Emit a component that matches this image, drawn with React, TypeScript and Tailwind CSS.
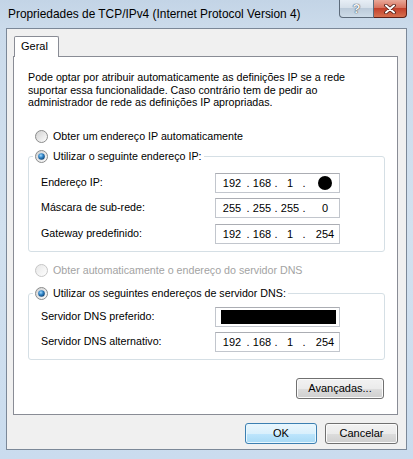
import { useId } from "react";

const font = "font-['Liberation_Sans',Arial,sans-serif]";

function Radio({ checked = false, disabled = false }: { checked?: boolean; disabled?: boolean }) {
  const id = useId().replace(/:/g, "");
  return (
    <svg width="13" height="13" viewBox="0 0 13 13" className="shrink-0">
      <defs>
        <linearGradient id={`f${id}`} x1="0" y1="0" x2="1" y2="1">
          <stop offset="0" stopColor={disabled ? "#e6e6e6" : "#cfcfcf"} />
          <stop offset="1" stopColor="#ffffff" />
        </linearGradient>
        <radialGradient id={`d${id}`} cx="0.4" cy="0.35" r="0.75">
          <stop offset="0" stopColor="#a8ddff" />
          <stop offset="0.45" stopColor="#2f83c6" />
          <stop offset="1" stopColor="#0b3560" />
        </radialGradient>
      </defs>
      <circle cx="6.5" cy="6.5" r="6" fill={`url(#f${id})`} stroke={disabled ? "#c6c6c6" : "#8b8c8c"} />
      {checked && <circle cx="6.5" cy="6.5" r="3.3" fill={`url(#d${id})`} />}
    </svg>
  );
}

function IpBox({ parts, blob = false }: { parts: string[]; blob?: boolean }) {
  return (
    <div className="flex h-[20px] w-[125px] items-center border border-[#c2c6cd] border-t-[#abadb3] bg-white pl-[2px] text-[11px] leading-[18px]">
      <span className="w-[28px] text-center">{parts[0]}</span>
      <span className="w-[4px] text-center">.</span>
      <span className="w-[24px] text-center">{parts[1]}</span>
      <span className="w-[4px] text-center">.</span>
      <span className="w-[24px] text-center">{parts[2]}</span>
      <span className="w-[4px] text-center">.</span>
      <span className="ml-[6px] flex w-[26px] justify-center">
        {blob ? <span className="block h-[14px] w-[14px] rounded-full bg-black" /> : parts[3]}
      </span>
    </div>
  );
}

function Row({ label, children, className = "" }: { label: string; children: React.ReactNode; className?: string }) {
  return (
    <div className={`flex h-[20px] items-center pl-[12px] ${className}`}>
      <span className="w-[174px]">{label}</span>
      {children}
    </div>
  );
}

function Button({ children, primary = false, className = "" }: { children: React.ReactNode; primary?: boolean; className?: string }) {
  return (
    <div
      className={`flex h-[21px] items-center justify-center rounded-[3px] border text-[11px] ${
        primary
          ? "border-[#3c7fb1] bg-[linear-gradient(180deg,#eaf6fd_0%,#d9f0fc_50%,#bee6fd_50%,#a7d9f5_100%)] shadow-[inset_0_0_0_1px_#e6f7ff]"
          : "border-[#707070] bg-[linear-gradient(180deg,#f2f2f2_0%,#ebebeb_50%,#dddddd_50%,#cfcfcf_100%)] shadow-[inset_0_0_0_1px_#fbfbfb]"
      } ${className}`}
    >
      {children}
    </div>
  );
}

export default function App() {
  return (
    <div
      className={`flex h-[459px] w-[413px] flex-col overflow-hidden bg-[linear-gradient(180deg,#c3d4e6_0%,#cbdbeb_6%,#d2e1ef_50%,#cadcee_100%)] px-[6px] pb-[9px] text-black ${font}`}
    >
      {/* Title bar */}
      <div className="flex h-[28px] items-start">
        <span className="ml-[2px] mt-[7px] text-[11.9px] leading-[15px]">
          Propriedades de TCP/IPv4 (Internet Protocol Version 4)
        </span>
        <div className="ml-auto flex">
          <div className="flex h-[18px] w-[35px] items-center justify-center rounded-bl-[4px] border border-t-0 border-[#5d6b7b] bg-[linear-gradient(180deg,#e7eef5_0%,#d6e0ea_45%,#bccbda_50%,#cddbe8_100%)] text-[13px] font-bold leading-none text-[#f3f5f7] [text-shadow:0_0_1px_#34404c,0_0_1px_#34404c]">
            ?
          </div>
          <div className="flex h-[18px] w-[33px] items-center justify-center rounded-br-[4px] border border-l-0 border-t-0 border-[#5e1f16] bg-[linear-gradient(180deg,#e9a898_0%,#d8735f_45%,#c3402b_50%,#d6704f_100%)]">
            <svg width="12" height="10" viewBox="0 0 12 10">
              <path d="M2 1.5 L10 8.5 M10 1.5 L2 8.5" stroke="#4a1a12" strokeWidth="3.6" strokeLinecap="round" />
              <path d="M2 1.5 L10 8.5 M10 1.5 L2 8.5" stroke="#ffffff" strokeWidth="2" strokeLinecap="round" />
            </svg>
          </div>
        </div>
      </div>

      {/* Client area */}
      <div className="flex flex-1 flex-col border border-[#7b8898] bg-[#f0f0f0] pb-[5px] pl-[6px] pr-[8px] pt-[7px]">
        <div className="relative z-10 -mb-px ml-[1px] h-[21px] w-[45px] rounded-t-[2px] border border-b-0 border-[#898c95] bg-white pl-[6px] text-[11px] leading-[18px]">
          Geral
        </div>

        <div className="flex h-[359px] flex-col border border-[#898c95] bg-white pl-[14px] pr-[12px] pt-[14px] text-[10.7px]">
          <p className="leading-[12.5px]">
            Pode optar por atribuir automaticamente as definições IP se a rede
            <br />
            suportar essa funcionalidade. Caso contrário tem de pedir ao
            <br />
            administrador de rede as definições IP apropriadas.
          </p>

          <div className="ml-[7px] mt-[21px] flex h-[14px] items-center gap-[5px]">
            <Radio />
            <span>Obter um endereço IP automaticamente</span>
          </div>

          <fieldset className="mt-[6px] flex flex-col rounded-[3px] border border-[#d5dfe5] pb-[7px] pt-[9px]">
            <legend className="ml-[4px] flex h-[14px] items-center gap-[5px] px-[2px]">
              <Radio checked />
              <span>Utilizar o seguinte endereço IP:</span>
            </legend>
            <Row label="Endereço IP:">
              <IpBox parts={["192", "168", "1", ""]} blob />
            </Row>
            <Row label="Máscara de sub-rede:" className="mt-[5px]">
              <IpBox parts={["255", "255", "255", "0"]} />
            </Row>
            <Row label="Gateway predefinido:" className="mt-[6px]">
              <IpBox parts={["192", "168", "1", "254"]} />
            </Row>
          </fieldset>

          <div className="ml-[7px] mt-[12px] flex h-[14px] items-center gap-[5px] text-[#a3a3a3]">
            <Radio disabled />
            <span>Obter automaticamente o endereço do servidor DNS</span>
          </div>

          <fieldset className="mt-[9px] flex flex-col rounded-[3px] border border-[#d5dfe5] pb-[7px] pt-[6px]">
            <legend className="ml-[4px] flex h-[14px] items-center gap-[5px] px-[2px]">
              <Radio checked />
              <span>Utilizar os seguintes endereços de servidor DNS:</span>
            </legend>
            <Row label="Servidor DNS preferido:">
              <div className="flex h-[20px] w-[125px] items-center border border-[#c2c6cd] border-t-[#abadb3] bg-white pl-[5px]">
                <div className="h-[14px] w-[115px] bg-black" />
              </div>
            </Row>
            <Row label="Servidor DNS alternativo:" className="mt-[5px]">
              <IpBox parts={["192", "168", "1", "254"]} />
            </Row>
          </fieldset>

          <div className="mt-[18px] flex justify-end pr-[1px]">
            <Button className="w-[88px]">Avançadas...</Button>
          </div>
        </div>

        <div className="mt-[8px] flex justify-end gap-[8px]">
          <Button primary className="w-[72px]">
            OK
          </Button>
          <Button className="w-[73px]">Cancelar</Button>
        </div>
      </div>
    </div>
  );
}
